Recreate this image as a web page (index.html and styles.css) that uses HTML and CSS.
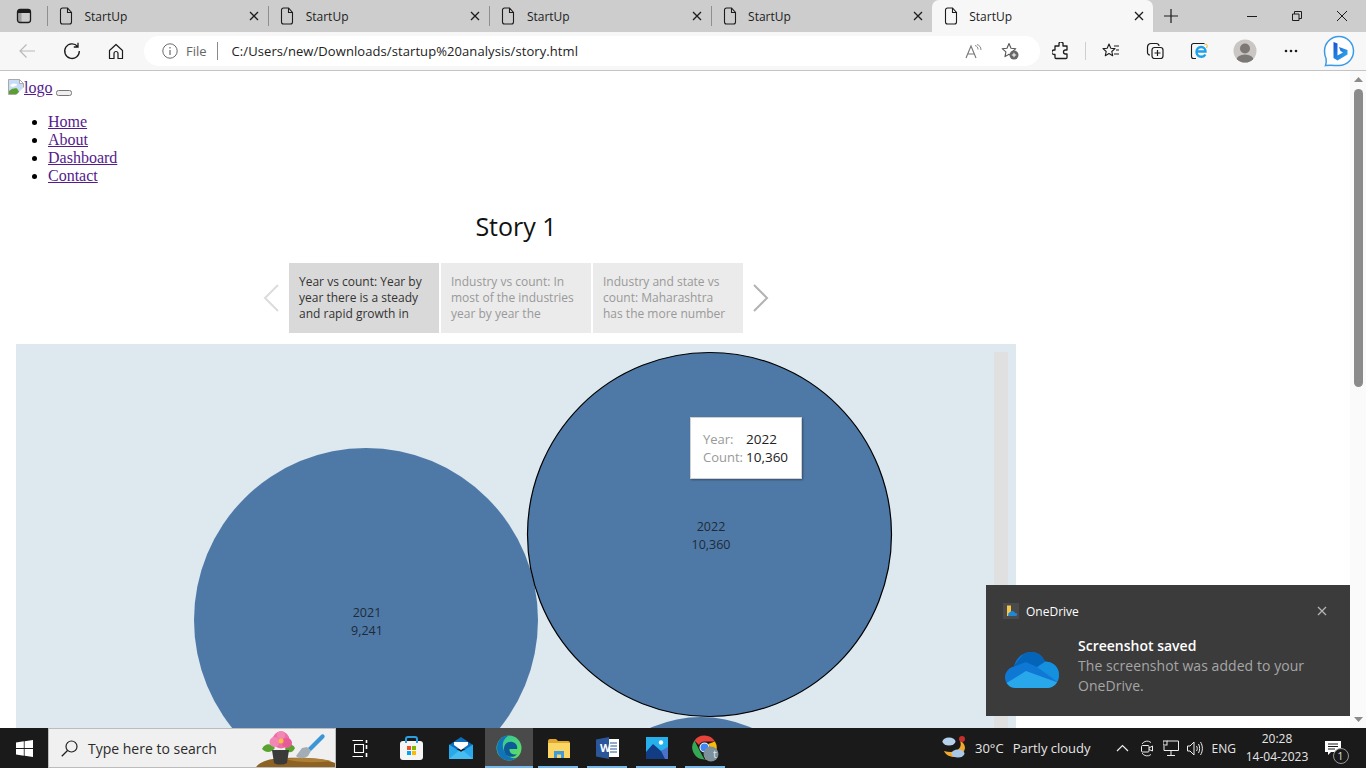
FILE: index.html
```html
<!DOCTYPE html>
<html>
<head>
    <title>StartUp</title>
    <link rel="stylesheet" href="styles.css">
</head>
<body>
    <svg class="defs" width="0" height="0">
        <symbol id="doc" viewBox="0 0 14 18"><path d="M1.5 3a2 2 0 0 1 2-2H8.500L12.500 5.500V15a2 2 0 0 1-2 2h-7a2 2 0 0 1-2-2ZM8.500 1V5.500H12.500" fill="none" stroke="#1c1c1c" stroke-width="1.100"/></symbol>
        <symbol id="x" viewBox="0 0 10 10"><path d="M1 1L9 9M9 1L1 9" fill="none" stroke="currentColor" stroke-width="1.300"/></symbol>
    </svg>

    <div class="tabstrip">
        <div class="strip-menu">
            <svg width="16" height="16" viewBox="0 0 16 16"><rect x="1.500" y="1.500" width="13" height="13" rx="2.500" fill="none" stroke="#1c1c1c" stroke-width="1.300"/><rect x="2" y="2" width="12" height="3" fill="#1c1c1c"/><rect x="2" y="2" width="3.500" height="12" fill="#1c1c1c" opacity=".25"/></svg>
        </div>
        <div class="tab"><svg class="tab-icon"><use href="#doc"/></svg><span class="tab-title">StartUp</span><svg class="tab-close"><use href="#x"/></svg></div>
        <div class="tab"><svg class="tab-icon"><use href="#doc"/></svg><span class="tab-title">StartUp</span><svg class="tab-close"><use href="#x"/></svg></div>
        <div class="tab"><svg class="tab-icon"><use href="#doc"/></svg><span class="tab-title">StartUp</span><svg class="tab-close"><use href="#x"/></svg></div>
        <div class="tab"><svg class="tab-icon"><use href="#doc"/></svg><span class="tab-title">StartUp</span><svg class="tab-close"><use href="#x"/></svg></div>
        <div class="tab tab-active"><svg class="tab-icon"><use href="#doc"/></svg><span class="tab-title">StartUp</span><svg class="tab-close"><use href="#x"/></svg></div>
        <svg class="new-tab" width="16" height="16" viewBox="0 0 16 16"><path d="M8 1V15M1 8H15" stroke="#1c1c1c" stroke-width="1.200"/></svg>
        <div class="win-controls">
            <svg width="12" height="12" viewBox="0 0 12 12"><path d="M1 6.500H11" stroke="#1c1c1c"/></svg>
            <svg width="12" height="12" viewBox="0 0 12 12"><path d="M1.500 4h6.500v6.500h-6.500zM3.500 4V1.500H10.500V8.500H8" fill="none" stroke="#1c1c1c"/></svg>
            <svg width="12" height="12" viewBox="0 0 12 12"><path d="M1 1L11 11M11 1L1 11" stroke="#1c1c1c"/></svg>
        </div>
    </div>

    <div class="toolbar">
        <div class="tool tool-nav"><svg width="18" height="16" viewBox="0 0 18 16"><path d="M17 8H2M8.500 1.500L2 8L8.500 14.500" fill="none" stroke="#b9b9b9" stroke-width="1.200"/></svg></div>
        <div class="tool tool-nav"><svg width="18" height="18" viewBox="0 0 18 18"><path d="M14.600 4.500A7.300 7.300 0 1 0 16.300 9M15 .8V5H10.800" fill="none" stroke="#1c1c1c" stroke-width="1.300"/></svg></div>
        <div class="tool tool-nav"><svg width="16" height="17" viewBox="0 0 16 17"><path d="M1.500 7.500L8 1.500L14.500 7.500V15.500H10V10.500A2 2 0 0 0 6 10.500V15.500H1.500Z" fill="none" stroke="#1c1c1c" stroke-width="1.200" stroke-linejoin="round"/></svg></div>

        <div class="address">
            <svg width="16" height="16" viewBox="0 0 16 16"><circle cx="8" cy="8" r="7.200" fill="none" stroke="#6b6b6b"/><path d="M8 7V12M8 4V5.400" stroke="#6b6b6b" stroke-width="1.200"/></svg>
            <span class="addr-file">File</span>
            <span class="addr-sep"></span>
            <span class="addr-url">C:/Users/new/Downloads/startup%20analysis/story.html</span>
            <svg class="addr-read" width="18" height="16" viewBox="0 0 18 16"><path d="M1 15L6 3L11 15M2.800 11H9.200" fill="none" stroke="#777" stroke-width="1.100"/><path d="M11 1.500C13 2 14 3.500 14 5.500M13 0.500C15.500 1.500 17 3 17 6" fill="none" stroke="#888" stroke-width="1" transform="translate(-1 1)"/></svg>
            <svg class="addr-fav" width="18" height="18" viewBox="0 0 18 18"><path d="M8 1.500L10 6.300L14.800 6.700L11.200 9.900L12 14.600L8 12.200L4 14.600L4.900 9.900L1.200 6.700L6 6.300Z" fill="none" stroke="#555" stroke-width="1.100" stroke-linejoin="round"/><circle cx="13" cy="13" r="4.500" fill="#666"/><path d="M13 10.800V15.200M10.800 13H15.200" stroke="#fff"/></svg>
        </div>

        <div class="tool tool-ext"><svg width="18" height="18" viewBox="0 0 18 18"><path d="M7 1.500A2 2 0 0 1 11 2.500V4H15V8H13.500A2 2 0 0 0 13.500 12H15V15.500A1 1 0 0 1 14 16.500H4A1 1 0 0 1 3 15.500V12.500H2A2.200 2.200 0 0 1 2 8H3V4H7Z" fill="none" stroke="#1c1c1c" stroke-width="1.300" stroke-linejoin="round"/></svg></div>
        <span class="tool-sep"></span>
        <div class="tool"><svg width="18" height="18" viewBox="0 0 18 18"><path d="M7 2L8.800 6.200L13 6.600L9.800 9.500L10.700 13.700L7 11.500L3.300 13.700L4.200 9.500L1 6.600L5.200 6.200Z" fill="none" stroke="#1c1c1c" stroke-width="1.100" stroke-linejoin="round"/><path d="M12 4H17M14 8H17M12 12H17" stroke="#1c1c1c" stroke-width="1.100"/></svg></div>
        <div class="tool"><svg width="18" height="18" viewBox="0 0 18 18"><rect x="6" y="5.500" width="11" height="11" rx="2.500" fill="none" stroke="#1c1c1c" stroke-width="1.200"/><path d="M4 13A2.500 2.500 0 0 1 1.500 10.500V5A3.500 3.500 0 0 1 5 1.500H10.500A2.500 2.500 0 0 1 13 4M11.500 8V14M8.500 11H14.500" fill="none" stroke="#1c1c1c" stroke-width="1.200"/></svg></div>
        <div class="tool"><svg width="18" height="18" viewBox="0 0 18 18"><path d="M6 16.500H3.500A2 2 0 0 1 1.500 14.500V3.500A2 2 0 0 1 3.500 1.500H14.500" fill="none" stroke="#1c1c1c" stroke-width="1.100"/><path d="M7 9.500H15.500C15.500 6.800 13.500 5 11.200 5C8.500 5 6.500 7 6.500 9.800C6.500 12.800 8.500 14.800 11.200 14.800C13 14.800 14.500 14 15.300 12.500" fill="none" stroke="#1da1e8" stroke-width="2.400"/><path d="M14.500 3C17 1.500 18 3 16.500 6" stroke="#f0b429" fill="none"/></svg></div>
        <div class="tool tool-avatar">
            <svg width="24" height="24" viewBox="0 0 24 24"><defs><clipPath id="av"><circle cx="12" cy="12" r="11.500"/></clipPath></defs><g clip-path="url(#av)"><rect width="24" height="24" fill="#c9c6c3"/><circle cx="12" cy="9.500" r="5" fill="#7b7875"/><ellipse cx="12" cy="21" rx="8.500" ry="5.500" fill="#7b7875"/></g></svg>
        </div>
        <div class="tool tool-dots"><svg width="14" height="4" viewBox="0 0 14 4"><circle cx="2" cy="2" r="1.300" fill="#1c1c1c"/><circle cx="7" cy="2" r="1.300" fill="#1c1c1c"/><circle cx="12" cy="2" r="1.300" fill="#1c1c1c"/></svg></div>
        <div class="tool tool-bing"><svg width="32" height="32" viewBox="0 0 32 32"><defs><linearGradient id="bing" x1="0" y1="0" x2="1" y2="1"><stop offset="0" stop-color="#1b4fd0"/><stop offset="1" stop-color="#2fb4f0"/></linearGradient></defs><path d="M16 1.500A14.500 14.500 0 1 1 16 30.500C12 30.500 7 30 2.500 30.500C3.500 28.500 3.500 26 3 23.500C2 21.500 1.500 19 1.500 16A14.500 14.500 0 0 1 16 1.500Z" fill="#fff" stroke="#3a9be8" stroke-width="1.500"/><path d="M10.500 7L14.500 8.500V20.500L20 17.500L17.500 16L16 12L24.500 15V19.500L14.500 25.500L10.500 23Z" fill="url(#bing)"/></svg></div>
    </div>

    <div class="viewport">
        <div class="page">
            <div class="logo-line">
                <a class="link" href="#"><svg class="broken-img" width="16" height="16" viewBox="0 0 16 16"><path d="M.5.500H11.500L15.500 4.500V15.500H.5Z" fill="#c6dcf7" stroke="#a9a9a9"/><path d="M2 7C4 4 7 4 9.500 6L5 8Z" fill="#fff"/><path d="M1 15V12C4 9.500 7 9 9 9.500L12.500 15Z" fill="#5c9e31"/><path d="M11.500.5V4.500H15.500Z" fill="#fff" stroke="#a9a9a9"/><path d="M16 8L8 16H16Z" fill="#fff"/></svg>logo</a>
                <button></button>
            </div>
            <ul class="links">
                <li><a class="link" href="#">Home</a></li>
                <li><a class="link" href="#">About</a></li>
                <li><a class="link" href="#">Dashboard</a></li>
                <li><a class="link" href="#">Contact</a></li>
            </ul>

            <div class="story">
                <h1 class="story-title">Story 1</h1>
                <div class="story-nav">
                    <svg class="nav-prev" width="16" height="28" viewBox="0 0 16 28"><path d="M15 1L2 14L15 27" fill="none" stroke="#dcdcdc" stroke-width="2"/></svg>
                    <div class="point point-active">Year vs count: Year by<br>year there is a steady<br>and rapid growth in</div>
                    <div class="point">Industry vs count: In<br>most of the industries<br>year by year the</div>
                    <div class="point">Industry and state vs<br>count: Maharashtra<br>has the more number</div>
                    <svg class="nav-next" width="16" height="28" viewBox="0 0 16 28"><path d="M1 1L14 14L1 27" fill="none" stroke="#b3b3b3" stroke-width="2"/></svg>
                </div>

                <div class="dashboard">
                    <svg class="bubbles" width="1000" height="700" viewBox="0 0 1000 700">
                        <rect x="978" y="8" width="14" height="692" fill="#e0e0e0"/>
                        <circle cx="350" cy="276" r="172" fill="#4e79a7"/>
                        <circle cx="685" cy="497" r="124" fill="#4e79a7"/>
                        <circle cx="693.500" cy="190.500" r="182" fill="#4e79a7" stroke="#000" stroke-width="1.200"/>
                        <text class="bubble-label" x="351" y="273">2021</text>
                        <text class="bubble-label" x="351" y="291">9,241</text>
                        <text class="bubble-label" x="695" y="187">2022</text>
                        <text class="bubble-label" x="695" y="205">10,360</text>
                    </svg>
                    <div class="tooltip">
                        <span class="tip-key">Year:</span><span class="tip-val">2022</span>
                        <span class="tip-key">Count:</span><span class="tip-val">10,360</span>
                    </div>
                </div>
            </div>
        </div>

        <div class="scrollbar">
            <svg width="9" height="5" viewBox="0 0 9 5"><path d="M0 5L4.500 0L9 5Z" fill="#8a8a8a"/></svg>
            <div class="thumb"></div>
            <svg class="scroll-down" width="9" height="5" viewBox="0 0 9 5"><path d="M0 0L4.500 5L9 0Z" fill="#8a8a8a"/></svg>
        </div>

        <div class="toast">
            <div class="toast-head">
                <svg width="16" height="16" viewBox="0 0 16 16"><rect width="16" height="16" fill="#4a4a4a"/><path d="M4 2.500H8V9.500L5 13H4Z" fill="#f5c84c"/><path d="M6 13A2 2 0 0 1 6.500 9.500A3 3 0 0 1 12 10A1.500 1.500 0 0 1 13 13Z" fill="#1e88d8"/></svg>
                <span class="toast-app">OneDrive</span>
                <svg class="toast-close"><use href="#x"/></svg>
            </div>
            <div class="toast-body">
                <svg width="54" height="36" viewBox="0 0 54 36">
                    <defs><clipPath id="cloud"><path d="M11 36C4.500 36 0 31 0 25.500C0 19.500 4.500 15.500 9 14.500C11 6 18 0 26 0C32 0 37 3 40 9.500C48 9.500 54 15 54 23C54 30 49 36 42 36Z"/></clipPath></defs>
                    <g clip-path="url(#cloud)">
                        <rect width="54" height="36" fill="#0f78d4"/>
                        <path d="M32 15L40 9L54 12V31Z" fill="#1490df"/>
                        <path d="M8 15L20 0H34L41 9L32 15L21 10Z" fill="#0364b8"/>
                        <path d="M0 32L21 19L54 31V36H0Z" fill="#28a8ea"/>
                    </g>
                </svg>
                <div class="toast-text">
                    <div class="toast-title">Screenshot saved</div>
                    <div class="toast-msg">The screenshot was added to your<br>OneDrive.</div>
                </div>
            </div>
        </div>
    </div>

    <div class="taskbar">
        <div class="start"><svg width="17" height="17" viewBox="0 0 17 17"><path d="M0 2.400L7.800 1.300V8H0ZM8.600 1.200L17 0V8H8.600ZM0 9H7.800V15.700L0 14.600ZM8.600 9H17V17L8.600 15.800Z" fill="#fff"/></svg></div>
        <div class="search">
            <svg width="17" height="17" viewBox="0 0 17 17"><circle cx="10.500" cy="6.500" r="5.500" fill="none" stroke="#222" stroke-width="1.200"/><path d="M6.500 10.500L.8 16.300" stroke="#222" stroke-width="1.300"/></svg>
            <span class="search-text">Type here to search</span>
            <svg class="search-art" width="80" height="40" viewBox="0 0 80 40">
                <path d="M0 40C3 33 14 29 30 29C48 28 70 29 80 34V40Z" fill="#8d6223"/>
                <path d="M30 30C45 28 66 29 76 32C60 34 44 34 30 30Z" fill="#ac8036"/>
                <path d="M7 20C10 14 16 14 20 19C16 24 11 24 7 20ZM30 20C32 14 37 14 40 19C38 24 33 25 30 20Z" fill="#59a22e"/>
                <path d="M17 21H34L32 34C28 36 22 36 19 34Z" fill="#3a3a38"/>
                <circle cx="26" cy="11" r="8.500" fill="#ee6ea5"/><circle cx="19.500" cy="13" r="5" fill="#f286b4"/><circle cx="32" cy="14" r="5" fill="#e75c98"/><circle cx="26" cy="6" r="4" fill="#f286b4"/>
                <circle cx="26" cy="12" r="2.500" fill="#f3c03f"/>
                <path d="M41 27L47 19L52 18L56 22L53 27C49 30 44 30 41 27Z" fill="#a4adb4"/>
                <path d="M53 19L66 6C68 4 71 7 69 9L56 22Z" fill="#3d94d6"/>
            </svg>
        </div>
        <div class="task-items">
            <div class="task task-view"><svg width="17" height="17" viewBox="0 0 17 17"><path d="M.5 .5H11M.5 16.500H11M2.500 4.500H11.500V12.500H2.500Z" fill="none" stroke="#fff" stroke-width="1.100"/><path d="M14.500 0V3M14.500 5V9M14.500 13V17" stroke="#fff" stroke-width="1.600"/></svg></div>
            <div class="task"><svg width="24" height="25" viewBox="0 0 24 25"><rect y="5" width="23" height="19" rx="3" fill="#f5f5f5"/><path d="M6 7V3A2 2 0 0 1 8 1H15A2 2 0 0 1 17 3V7" fill="none" stroke="#2aa0e0" stroke-width="2"/><rect x="7" y="10" width="4" height="4" fill="#f25022"/><rect x="12" y="10" width="4" height="4" fill="#7fba00"/><rect x="7" y="15" width="4" height="4" fill="#00a4ef"/><rect x="12" y="15" width="4" height="4" fill="#ffb900"/></svg></div>
            <div class="task"><svg width="24" height="22" viewBox="0 0 24 22"><path d="M0 8L12 0L24 8V12H0Z" fill="#0f6cbd"/><path d="M5 5H19V8L12 13L5 8Z" fill="#fff"/><path d="M0 7.500L12 15L24 7.500V22H0Z" fill="#29a9ec"/><path d="M0 22L10 13.500L12 15L14 13.500L24 22Z" fill="#48bdf2"/></svg></div>
            <div class="task task-open task-active"><svg width="26" height="26" viewBox="0 0 26 26"><defs><linearGradient id="edge" x1="0" y1="0" x2="1" y2="1"><stop offset="0" stop-color="#2cc3a6"/><stop offset="1" stop-color="#67e05a"/></linearGradient></defs><circle cx="13" cy="13" r="12.500" fill="url(#edge)"/><path d="M1 13C1 6 6 .5 13 .5C8 3 6 8 7 13C8.500 20 15 25 21 22.500C18 25 15 25.500 13 25.500C6 25.500 1 20 1 13Z" fill="#1173b8"/><path d="M8 14C8 9 12 6 16.500 7C20 8 22 11 21 14H13.500C13 18 17 20 21 19.500C17 24 8 22 8 14Z" fill="#0d5a99"/></svg></div>
            <div class="task task-open"><svg width="22" height="19" viewBox="0 0 22 19"><path d="M0 2A2 2 0 0 1 2 0H8L10 2H20A2 2 0 0 1 22 4V19H0Z" fill="#e0a92e"/><rect y="4" width="22" height="15" fill="#fbd665"/><path d="M6 19V12H16V19H13V15.500H9V19Z" fill="#3f9bdc"/></svg></div>
            <div class="task task-open"><svg width="23" height="22" viewBox="0 0 23 22"><rect x="8" y="2" width="15" height="18" fill="#fff"/><path d="M14 6H21M14 9H21M14 12H21M14 15H21" stroke="#2b579a" stroke-width="1.200"/><path d="M0 2.500L13 0V22L0 19.500Z" fill="#2b579a"/></svg><span class="word-w">W</span></div>
            <div class="task task-open"><svg width="22" height="22" viewBox="0 0 22 22"><rect width="22" height="22" fill="#26b0ec"/><circle cx="15" cy="5.500" r="2.200" fill="#fff"/><path d="M0 22V15L7 7L15 14L22 12V22Z" fill="#123d85"/><path d="M15 14L22 10V22H19Z" fill="#4a72c8"/></svg></div>
            <div class="task task-open"><svg width="27" height="27" viewBox="0 0 27 27"><path d="M12.500 .5A12 12 0 0 1 23 6.500H12.500A6 6 0 0 0 7 10L2.500 5.500A12 12 0 0 1 12.500 .5Z" fill="#e8433a"/><path d="M2.500 5.500L7.500 15.500L12.500 24.500A12 12 0 0 1 2.500 5.500Z" fill="#34a853"/><path d="M23 6.500A12 12 0 0 1 12.500 24.500L17.500 15.500A6 6 0 0 0 16 9Z" fill="#fbbc05"/><circle cx="12.500" cy="12.500" r="5" fill="#fff"/><circle cx="12.500" cy="12.500" r="4" fill="#4285f4"/><circle cx="19" cy="19" r="7.500" fill="#7d919c"/></svg><span class="chrome-badge">t</span></div>
        </div>
        <div class="tray">
            <svg class="tray-weather" width="26" height="26" viewBox="0 0 26 26"><path d="M19 6C22 12 16 20 3 16C6 24 22 25 24 13C24 10 22 7 19 6Z" fill="#f0a92e"/><circle cx="21" cy="4" r="3" fill="#c62f2a"/><ellipse cx="8" cy="6.500" rx="6.500" ry="4" fill="#b5d2ec"/><ellipse cx="17" cy="18.500" rx="6.500" ry="4" fill="#a9c8e6"/></svg>
            <span class="tray-temp">30°C</span>
            <span class="tray-cond">Partly cloudy</span>
            <svg class="tray-chev" width="13" height="8" viewBox="0 0 13 8"><path d="M1 7L6.500 1.500L12 7" fill="none" stroke="#eee" stroke-width="1.200"/></svg>
            <svg class="tray-meet" width="12" height="17" viewBox="0 0 12 17"><path d="M1 4A6 6 0 0 1 10 2.500M1 13A6 6 0 0 0 10 14.500" fill="none" stroke="#ddd"/><rect x=".5" y="5.500" width="7.500" height="6.500" rx="1" fill="none" stroke="#eee"/><path d="M8 8L11.500 6V11L8 9.500" fill="none" stroke="#eee"/></svg>
            <svg class="tray-net" width="16" height="16" viewBox="0 0 16 16"><path d="M4 1H15.500V10.500H1V6M8 10.500V15M4 15.500H12" fill="none" stroke="#eee"/><rect x="0" y="1" width="4" height="4" fill="none" stroke="#eee"/></svg>
            <svg class="tray-vol" width="16" height="15" viewBox="0 0 16 15"><path d="M.5 5H3L7 1V14L3 10H.5ZM9.500 5C10.500 6.500 10.500 8.500 9.500 10M11.500 3C13 5.500 13 9.500 11.500 12M13.500 1C16 5 16 10 13.500 14" fill="none" stroke="#eee"/></svg>
            <span class="tray-lang">ENG</span>
            <div class="clock"><span>20:28</span><span>14-04-2023</span></div>
            <div class="notif">
                <svg width="16" height="15" viewBox="0 0 16 15"><path d="M0 0H16V11H6L3 14V11H0Z" fill="#fff"/><path d="M3 3H13M3 5.500H13M3 8H10" stroke="#1a1a1a"/></svg>
                <span class="notif-count">1</span>
            </div>
        </div>
    </div>
</body>
</html>
```

FILE: styles.css
```css
html, body { margin: 0; height: 768px; overflow: hidden; }
body { display: flex; flex-direction: column; background: #fff; font-family: "Open Sans", sans-serif; }
.defs { position: absolute; }

/* browser tabs */
.tabstrip { display: flex; align-items: center; height: 32px; background: #cdcdcd; flex: none; }
.strip-menu { width: 47px; display: flex; justify-content: center; box-sizing: border-box; }
.tab { width: 221.2px; height: 32px; display: flex; align-items: center; box-sizing: border-box; padding: 0 9px 0 12px; position: relative; color: #1c1c1c; }
.tab::before { content: ""; position: absolute; left: 0; top: 6px; height: 20px; width: 1px; background: #8f8f8f; }
.tab-active { background: #f7f7f7; border-radius: 7px 7px 0 0; }
.tab-active::before { display: none; }
.tab-icon { width: 14px; height: 18px; }
.tab-title { font-size: 12px; margin-left: 11.5px; flex: 1; }
.tab-close { width: 10px; height: 10px; }
.new-tab { margin-left: 10px; }
.win-controls { margin-left: auto; display: flex; gap: 33px; padding-right: 18px; }

/* address bar */
.toolbar { display: flex; align-items: center; height: 38px; background: #f7f7f7; border-bottom: 1px solid #c4c4c4; padding-left: 5px; flex: none; }
.tool { width: 44px; display: flex; justify-content: center; align-items: center; flex: none; }
.tool-nav { width: 44.5px; }
.address { width: 896px; height: 30px; margin-left: 5.5px; border-radius: 15px; background: #fff; display: flex; align-items: center; padding: 0 21px 0 18px; box-sizing: border-box; flex: none; }
.addr-file { font-size: 13px; color: #666; margin-left: 8px; }
.addr-sep { width: 1px; height: 18px; background: #8a8a8a; margin: 0 14px 0 10px; }
.addr-url { font-size: 13px; color: #222; flex: 1; letter-spacing: .08px; }
.addr-read { margin-right: 18px; }
.tool-ext { width: 42px; }
.tool-sep { width: 1px; height: 18px; background: #cfcfcf; margin: 0 3px; }
.tool-avatar { margin-left: 2px; }
.tool-dots { margin-left: 2px; }
.tool-bing { margin-left: 4px; }

/* page area */
.viewport { flex: 1; display: flex; position: relative; overflow: hidden; min-height: 0; }
.page { flex: 1; padding: 8px; min-width: 0; font-family: "Liberation Serif", serif; font-size: 16px; line-height: 18px; }
.link { color: #551a8b; }
.broken-img { vertical-align: -2px; }
.links { margin: 16px 0; padding-left: 40px; }
.story { margin-left: 8px; width: 1000px; font-family: "Open Sans", sans-serif; }
.story-title { margin: 0; font-weight: 400; font-size: 25px; line-height: 50px; height: 52px; text-align: center; color: #111; }
.story-nav { display: flex; justify-content: center; align-items: center; gap: 2px; margin-top: 10px; margin-bottom: 11px; }
.nav-prev { margin-right: 8px; }
.nav-next { margin-left: 8px; }
.point { width: 150px; height: 70px; box-sizing: border-box; padding: 11px 10px 0; background: #ebebeb; color: #999; font-size: 12px; line-height: 16px; white-space: nowrap; overflow: hidden; }
.point-active { background: #d9d9d9; color: #333; }

.dashboard { position: relative; height: 700px; background: #dde8ef; }
.bubbles { display: block; }
.bubble-label { font-size: 12.5px; fill: #1f2a36; text-anchor: middle; }
.tooltip { position: absolute; left: 674px; top: 73px; width: 112px; height: 62px; box-sizing: border-box; padding: 12px 12px; background: #fff; border: 1px solid #d0d0d0; box-shadow: 1px 1px 2px rgba(0,0,0,.35); display: grid; grid-template-columns: 43px auto; grid-auto-rows: 18px; font-size: 13px; line-height: 18px; }
.tip-key { color: #999; }
.tip-val { color: #222; font-size: 13.500px; }

.scrollbar { width: 16px; flex: none; display: flex; flex-direction: column; align-items: center; padding-top: 6px; box-sizing: border-box; background: #fafafa; }
.thumb { width: 9px; height: 298px; margin-top: 7px; background: #8b8b8b; border-radius: 5px; }
.scroll-down { margin-top: auto; margin-bottom: 6px; }

.toast { position: absolute; right: 16px; bottom: 12px; width: 364px; height: 131px; background: #3b3b3b; color: #fff; box-sizing: border-box; padding: 18px 20px 0 17px; }
.toast-head { display: flex; align-items: center; height: 16px; }
.toast-app { font-size: 12px; margin-left: 7px; flex: 1; }
.toast-close { width: 10px; height: 10px; color: #b5b5b5; margin-right: 3px; }
.toast-body { display: flex; margin-top: 18px; padding-left: 2px; }
.toast-body > svg { margin-top: 15px; }
.toast-text { margin-left: 19px; font-size: 14px; line-height: 20px; margin-top: -1px; }
.toast-title { font-weight: 600; }
.toast-msg { color: #a6a6a6; letter-spacing: .06px; }

/* windows taskbar */
.taskbar { display: flex; align-items: center; height: 40px; background: #1a1a1a; flex: none; color: #eee; }
.start { width: 48px; display: flex; justify-content: center; }
.search { width: 288px; height: 40px; box-sizing: border-box; background: #f0f0f0; border: 1px solid #bcbcbc; display: flex; align-items: center; padding-left: 12px; position: relative; overflow: hidden; }
.search-text { font-size: 14px; color: #2b2b2b; margin-left: 10px; }
.search-art { position: absolute; right: 0; top: 0; }
.task-items { display: flex; padding-left: 2px; height: 40px; }
.task { width: 49px; height: 40px; display: flex; align-items: center; justify-content: center; position: relative; box-sizing: border-box; }
.task-view { padding-right: 4px; }
.task-open::after { content: ""; position: absolute; left: 4px; right: 5px; bottom: 0; height: 2px; background: #76b9ed; }
.task-active { background: #4a4a4a; width: 48px; margin-right: 1px; }
.task-active::after { left: 0; right: 0; }
.word-w { position: absolute; left: 17px; top: 12px; color: #fff; font-size: 11px; font-weight: 700; }
.chrome-badge { position: absolute; left: 28px; top: 18px; font-size: 11px; color: #dfe5e8; width: 12px; text-align: center; }
.tray { margin-left: auto; display: flex; align-items: center; font-size: 13px; color: #e6e6e6; }
.tray-temp { margin-left: 8px; }
.tray-cond { margin-left: 9px; }
.tray-chev { margin-left: 25px; }
.tray-meet { margin-left: 12px; }
.tray-net { margin-left: 10px; }
.tray-vol { margin-left: 8px; }
.tray-lang { font-size: 12px; margin-left: 9px; }
.clock { display: flex; flex-direction: column; align-items: center; font-size: 12px; line-height: 18px; width: 82px; }
.notif { width: 48px; display: flex; justify-content: center; position: relative; padding-right: 18px; box-sizing: border-box; }
.notif-count { position: absolute; left: 14.500px; top: 7px; width: 14px; height: 14px; border: 1px solid #999; border-radius: 50%; background: #1a1a1a; font-size: 11px; line-height: 14px; text-align: center; color: #ddd; }
```
